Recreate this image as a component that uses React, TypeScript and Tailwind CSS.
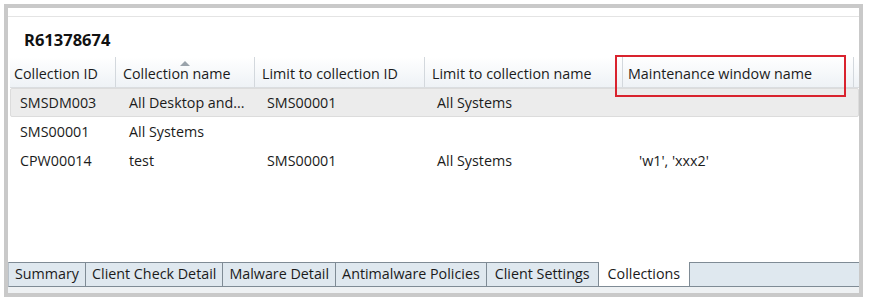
import React from "react";

const font = { fontFamily: '"Open Sans", "Noto Sans", "Liberation Sans", sans-serif' };

const cols = [
  { w: "w-[106px]", hp: "pl-[4px]", bp: "pl-[10px]", label: "Collection ID" },
  { w: "w-[139px]", hp: "pl-[7px]", bp: "pl-[13px]", label: "Collection name" },
  { w: "w-[170px]", hp: "pl-[7px]", bp: "pl-[12px]", label: "Limit to collection ID" },
  { w: "w-[198px]", hp: "pl-[7px]", bp: "pl-[12px]", label: "Limit to collection name" },
  { w: "w-[231px]", hp: "pl-[5px]", bp: "pl-[16px]", label: "Maintenance window name" },
];

const rows = [
  ["SMSDM003", "All Desktop and...", "SMS00001", "All Systems", ""],
  ["SMS00001", "All Systems", "", "", ""],
  ["CPW00014", "test", "SMS00001", "All Systems", "'w1', 'xxx2'"],
];

const tabs = ["Summary", "Client Check Detail", "Malware Detail", "Antimalware Policies", "Client Settings"];

export default function App() {
  return (
    <div className="w-[872px] h-[297px] bg-white overflow-hidden pt-[4px] pl-[4px]" style={font}>
      <div className="relative w-[859px] h-[293px] border-[4px] border-b-0 border-[#c9c9c9] flex flex-col text-[#1b1b1b]">
        <div className="h-[9px] border-b border-[#e4e4e4] shrink-0" />
        <div className="h-[40px] shrink-0 pl-[16px] pt-[13px] text-[16.5px] font-bold leading-[20px] text-[#111]">R61378674</div>
        {/* header */}
        <div className="ml-[2px] h-[31px] shrink-0 flex bg-gradient-to-b from-white to-[#eef2f6] border-b border-[#dadde0] text-[14.3px]">
          {cols.map((c, i) => (
            <div
              key={i}
              className={`${c.w} ${c.hp} relative flex items-end pb-[3px] border-r border-[#d3d8dd] whitespace-nowrap shrink-0`}
            >
              {c.label}
              {i === 1 && (
                <svg className="absolute left-[64px] top-[4px]" width="10" height="5" viewBox="0 0 10 5">
                  <path d="M0 5 L5 0 L10 5 Z" fill="#9aa3ab" />
                </svg>
              )}
            </div>
          ))}
          <div className="flex-1" />
        </div>
        {/* rows */}
        <div className="flex-1 ml-[2px] flex flex-col text-[14.3px]">
          {rows.map((r, ri) => (
            <div
              key={ri}
              className={`h-[29px] flex items-center shrink-0 ${ri === 0 ? "bg-[#ececec] border border-[#dcdcdc] rounded-[2px]" : "border border-transparent"}`}
            >
              {r.map((cell, ci) => (
                <div key={ci} className={`${cols[ci].w} ${cols[ci].bp} whitespace-nowrap shrink-0 ${ci === 0 ? "-ml-px" : ""}`}>
                  {cell}
                </div>
              ))}
            </div>
          ))}
          <div className="flex-1" />
        </div>
        {/* tabs */}
        <div className="h-[25px] shrink-0 flex text-[14.3px] leading-none">
          {tabs.map((t, i) => (
            <div
              key={i}
              className={`h-full flex items-center ${i === 4 ? "px-[8px]" : "px-[6px]"} bg-[#dfe8ef] border-t border-b border-r border-[#7f8b95] whitespace-nowrap ${i === 0 ? "border-l border-l-[#b9c2ca]" : ""}`}
            >
              {t}
            </div>
          ))}
          <div className="h-full flex items-center px-[9px] bg-white border-t border-t-white border-b border-[#7f8b95] whitespace-nowrap">Collections</div>
          <div className="h-full flex-1 bg-[#dfe8ef] border-t border-b border-l border-[#7f8b95]" />
        </div>
        <div className="h-[6px] shrink-0 bg-[#eef1f3]" />
        <div className="h-[4px] shrink-0 bg-[#c9c9c9] -mx-[4px]" />
        {/* red highlight */}
        <div className="absolute left-[607px] top-[47px] w-[231px] h-[42px] border-2 border-[#d9232e]" />
      </div>
    </div>
  );
}
